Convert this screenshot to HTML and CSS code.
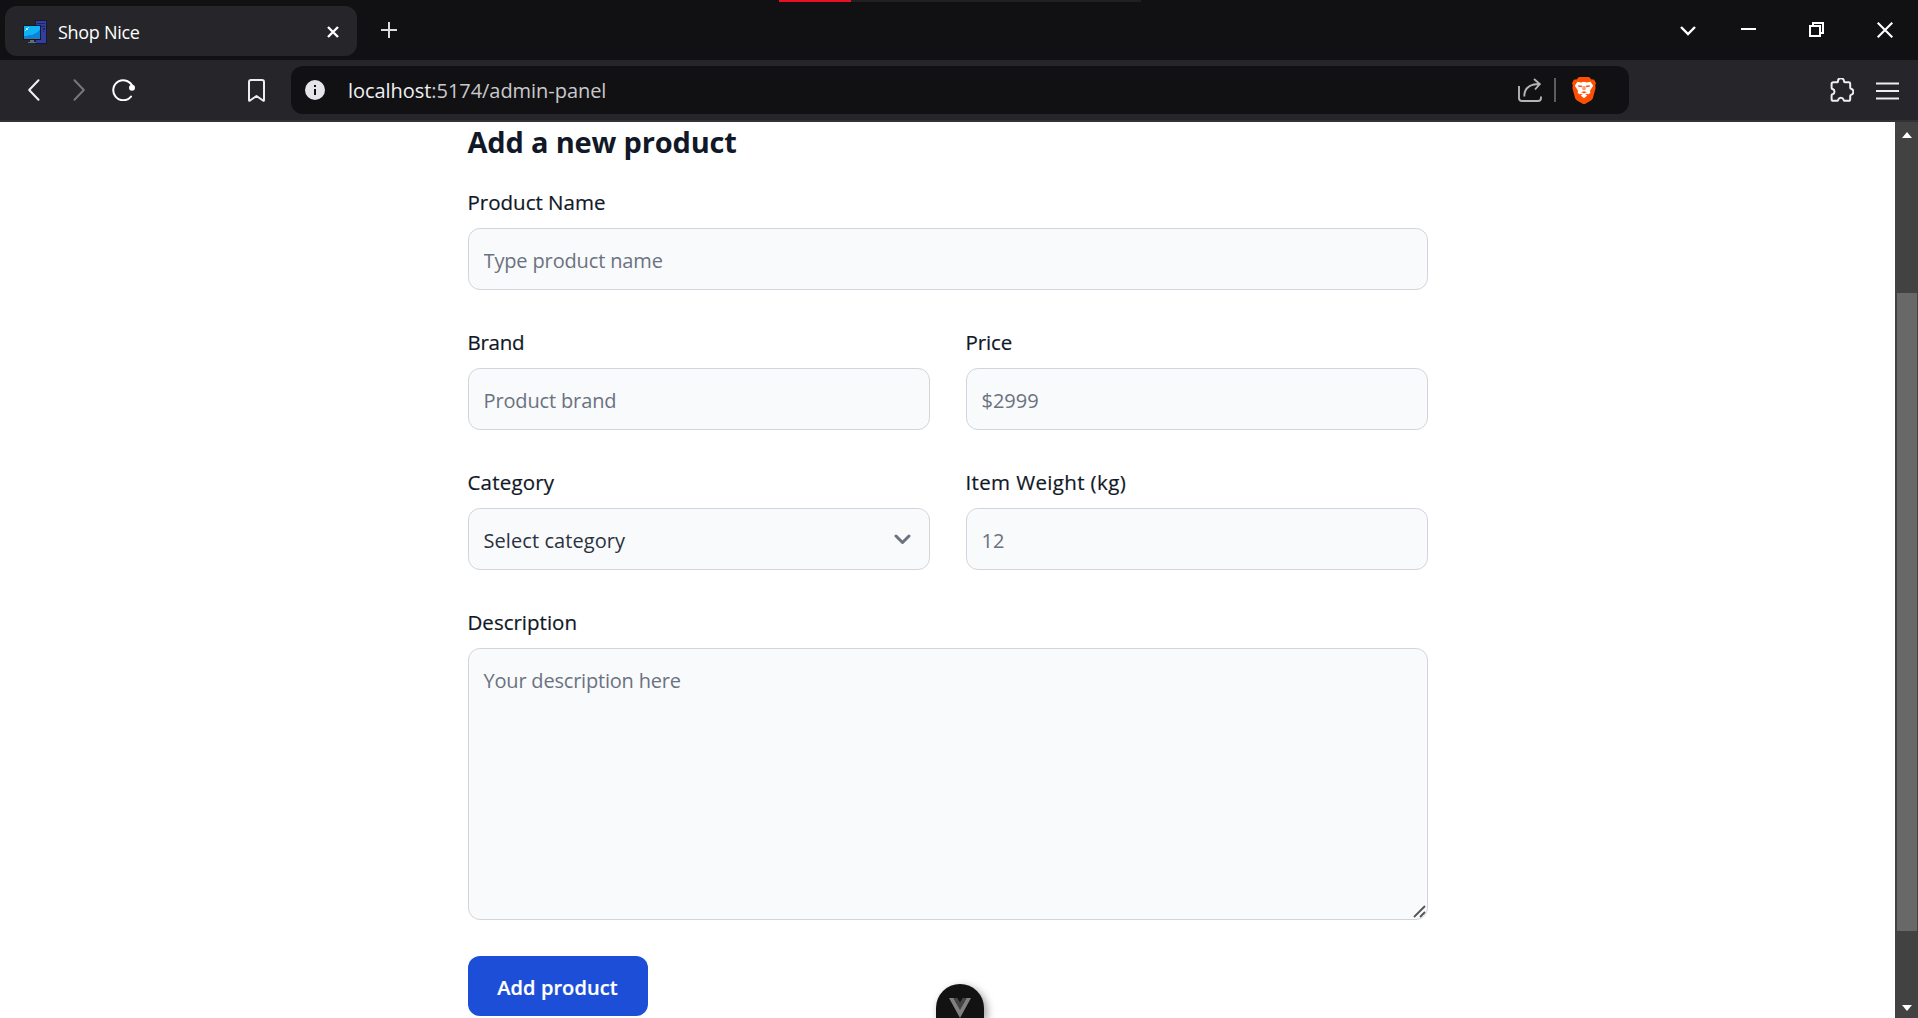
FILE: index.html
```html
<!DOCTYPE html>
<html lang="en">
<head>
<meta charset="utf-8">
<title>Shop Nice</title>
<link rel="stylesheet" href="styles.css">
</head>
<body>
<header class="tabstrip">
  <div class="tab">
    <svg class="favicon" width="24" height="24" viewBox="0 0 24 24" shape-rendering="crispEdges">
      <path fill="#14163a" d="M12 0h12v24H12z"/><path fill="#343f9c" d="M13 1h10v22H13z"/>
      <path fill="#1c2266" d="M14 3h8v1h-8zM14 6h8v1h-8zM20 8h2v2h-2zM20 11h1v1h-1z"/>
      <path fill="#0d1a33" d="M0 5h18v15H0z"/><path fill="#0a84d8" d="M1 6h16v12H1z"/>
      <path fill="#10b4f4" d="M1 6h16v4l-4 3-4 2-8 1z"/><path fill="#b8ecff" d="M3 8h2v2H3zM5 7h1v1H5zM2 10h1v1H2z"/>
      <path fill="#56707f" d="M1 18h16v1H1zM7 20h4v2H7zM5 22h8v1H5z"/>
    </svg>
    <span class="tab-title">Shop Nice</span>
    <svg class="tab-close" width="12" height="12" viewBox="0 0 12 12"><path d="M1 1l10 10M11 1L1 11" stroke="#fff" stroke-width="2.4"/></svg>
  </div>
  <svg class="newtab" width="16" height="16" viewBox="0 0 16 16"><path d="M8 0v16M0 8h16" stroke="#dcdcdf" stroke-width="2"/></svg>
  <svg class="win-menu" width="16" height="10" viewBox="0 0 16 10"><path d="M1 1l7 7 7-7" fill="none" stroke="#fff" stroke-width="2.4"/></svg>
  <svg class="win-min" width="15" height="2" viewBox="0 0 15 2"><path d="M0 0h15v2H0z" fill="#fff"/></svg>
  <svg class="win-restore" width="15" height="15" viewBox="0 0 15 15"><path d="M1 4h10v10H1zM4 4V1h10v10h-3" fill="none" stroke="#fff" stroke-width="2"/></svg>
  <svg class="win-close" width="16" height="16" viewBox="0 0 16 16"><path d="M.7.7l14.6 14.6M15.3.7L.7 15.3" stroke="#fff" stroke-width="2.1"/></svg>
  <div class="recbar"><div class="recbar-on"></div></div>
</header>
<nav class="toolbar">
  <svg class="back" width="12" height="22" viewBox="0 0 12 22"><path d="M10.5 1.2L1.2 11l9.3 9.8" fill="none" stroke="#f2f2f4" stroke-width="2" stroke-linecap="round" stroke-linejoin="round"/></svg>
  <svg class="forward" width="12" height="22" viewBox="0 0 12 22"><path d="M1.5 1.2L10.8 11l-9.3 9.8" fill="none" stroke="#77777b" stroke-width="2" stroke-linecap="round" stroke-linejoin="round"/></svg>
  <svg class="reload" width="24" height="22" viewBox="0 0 24 22"><path d="M20.800 8.200A10 10 0 1 0 19 17.600" fill="none" stroke="#fff" stroke-width="2" stroke-linecap="round"/><circle cx="20" cy="8.800" r="3" fill="#fff"/></svg>
  <svg class="bookmark" width="17" height="23" viewBox="0 0 17 23"><path d="M1 3q0-2 2-2h11q2 0 2 2v18q0 1.300-1 .5l-6.500-4.500L2 21.500q-1 .8-1-.5z" fill="none" stroke="#eee" stroke-width="2" stroke-linejoin="round"/></svg>
  <div class="omnibox">
    <svg class="info" width="20" height="20" viewBox="0 0 20 20"><circle cx="10" cy="10" r="10" fill="#e4e4ea"/><path d="M9 5h2v2H9zM9 9h2v6H9z" fill="#111113"/></svg>
    <span class="url"><span class="host">localhost</span>:5174/admin-panel</span>
    <svg class="share" width="24" height="24" viewBox="0 0 24 24"><path d="M1 8v12q0 3 3 3h16q3 0 3-3v-1.500M6.300 18.500q0-12.500 15-12.500M16 1l5.800 5L17 11.500" fill="none" stroke="#b4b4b6" stroke-width="1.900"/></svg>
    <span class="sep"></span>
    <svg class="brave" width="24" height="27" viewBox="0 0 24 27">
      <path d="M7 0h10l2.500 2.500L22 2.500 24 6l-.8 2.500.4 2.500-2.800 10.500L19 23.500 12 27.500 5 23.500 3.200 21.500.4 11l.4-2.500L0 6l2-3.500h2.500z" fill="#ff5000"/>
      <path d="M5.500 4.800l3.500.7 3-.7 3 .7 3.500-.7 2.700 4-3.200 5 .3 2.200-2 1.300-2-.4h-4.600l-2 .4-2-1.300.3-2.200-3.200-5z" fill="#fff"/>
      <path d="M12 16.300l3.300 2.200L12 21.300l-3.300-2.800z" fill="#fff"/>
      <path d="M6 8.300l4.300.5-.8 1.400-3-.5zM18 8.300l-4.300.5.8 1.400 3-.5zM10.700 9h.8l.1 4.200-1.100-.6zM13.300 9h-.8l-.1 4.200 1.100-.6zM9 15.200l3-1 3 1-1.700.5-1.300.8-1.300-.8z" fill="#ff5000"/>
    </svg>
  </div>
  <svg class="puzzle" width="24" height="24" viewBox="0 0 24 24"><path d="M3.500 4.300h4q.5 0 .5-1a3 3 0 0 1 6-.3q0 1.300.8 1.300h4q1.400 0 1.400 1.400v3.800q0 1 .8 1.200a3.200 3.200 0 0 1 0 6.200q-.8.300-.8 1.200v2.800q0 1.900-1.600 1.900h-4.300q-.7-.2-.8-1.200a2.700 2.700 0 0 0-5.200 0q-.1 1-.9 1.200h-4q-1.800 0-1.800-1.900v-3.500q0-1 1-1.100a2.800 2.800 0 0 0 0-5.300q-1-.2-1-1.100V6q0-1.700 1.900-1.700z" fill="none" stroke="#eee" stroke-width="2" stroke-linejoin="round"/></svg>
  <svg class="menu" width="23" height="18" viewBox="0 0 23 18"><path d="M0 1.500h23M0 9h23M0 16.500h23" stroke="#eee" stroke-width="2"/></svg>
</nav>
<div class="viewport">
  <main class="page">
    <form class="form">
      <h2 class="heading">Add a new product</h2>
      <div class="grid">
        <div class="field wide"><label class="label" for="name">Product Name</label><input class="input p-name" id="name" placeholder="Type product name"></div>
        <div class="field"><label class="label l-brand" for="brand">Brand</label><input class="input p-brand" id="brand" placeholder="Product brand"></div>
        <div class="field"><label class="label l-price" for="price">Price</label><input class="input" id="price" placeholder="$2999"></div>
        <div class="field"><label class="label l-cat" for="category">Category</label>
          <div class="input select" id="category"><span class="p-cat">Select category</span><svg width="17" height="11" viewBox="0 0 17 11"><path d="M2 2l6.500 6.500L15 2" fill="none" stroke="#6b7280" stroke-width="3" stroke-linecap="round" stroke-linejoin="round"/></svg></div></div>
        <div class="field"><label class="label l-weight" for="weight">Item Weight (kg)</label><input class="input" id="weight" placeholder="12"></div>
        <div class="field wide"><label class="label" for="description">Description</label>
          <div class="area-wrap"><textarea class="input area p-desc" id="description" placeholder="Your description here"></textarea>
          <svg class="grip" width="13" height="13" viewBox="0 0 13 13"><path d="M1 12L12 1M7 12l5-5" stroke="#555" stroke-width="1.800"/></svg></div></div>
      </div>
      <button class="submit" type="button">Add product</button>
    </form>
  </main>
  <div class="scrollbar">
    <svg class="arrow" width="10" height="6" viewBox="0 0 10 6"><path d="M0 6l5-6 5 6z" fill="#fff"/></svg>
    <div class="thumb"></div>
    <svg class="arrow" width="10" height="6" viewBox="0 0 10 6"><path d="M0 0l5 6 5-6z" fill="#fff"/></svg>
  </div>
</div>
<div class="devtools"><svg width="22" height="20" viewBox="0 0 22 20"><path d="M0 0h4.500L11 11.500 17.500 0H22L11 20z" fill="#808080"/><path d="M4.500 0h4L11 4.500 13.500 0h4L11 11.500z" fill="#444"/></svg></div>
</body>
</html>
```
FILE: styles.css
```css
* { box-sizing: border-box; }
body { margin: 0; width: 1918px; height: 1018px; overflow: hidden; display: flex; flex-direction: column; background: #fff; font-family: "Open Sans", "Noto Sans", sans-serif; }
svg { display: block; flex: none; }

.tabstrip { position: relative; height: 60px; background: #111113; display: flex; align-items: center; padding: 0 25px 0 5px; flex: none; }
.tab { width: 352px; height: 50px; margin-top: 2px; border-radius: 12px; background: #26262a; display: flex; align-items: center; padding: 0 18px; }
.favicon { margin-top: 2px; }
.tab-title { margin: 1px 0 0 11px; color: #fff; font-size: 18px; letter-spacing: -0.3px; white-space: nowrap; }
.tab-close { margin: 1px 0 0 auto; }
.newtab { margin-left: 24px; }
.win-menu { margin: 1px 0 0 auto; }
.win-min { margin: -2px 0 0 45px; }
.win-restore { margin: -1px 0 0 53px; }
.win-close { margin: -1px 0 0 53px; }
.recbar { position: absolute; left: 779px; top: 0; width: 362px; height: 2px; background: #202023; }
.recbar-on { width: 72px; height: 2px; background: #e81123; }

.toolbar { height: 62px; background: #26262a; border-bottom: 2px solid #323136; display: flex; align-items: center; padding: 0 19px 0 27.5px; flex: none; }
.forward { margin-left: 33px; }
.reload { margin: -1px 0 0 27px; }
.bookmark { margin: 1px 0 0 112.5px; }
.omnibox { width: 1338px; height: 48px; margin-left: 26px; border-radius: 12px; background: #111113; display: flex; align-items: center; padding: 0 33px 0 14px; }
.url { margin-left: 23px; color: #c9c9cd; font-size: 20px; letter-spacing: -0.05px; white-space: nowrap; }
.host { color: #f0f0f2; }
.share { margin-left: auto; }
.sep { width: 2px; height: 24px; margin: 0 16px 0 12px; background: #5d5d60; }
.puzzle { margin-left: auto; }
.menu { margin: 2px 0 0 22px; }

.viewport { flex: 1; min-height: 0; display: flex; overflow: hidden; }
.page { width: 1895px; display: flex; justify-content: center; background: #fff; }
.form { width: 960px; }
.heading { margin: 0 0 24px; height: 40px; color: #111827; font-size: 29px; font-weight: 700; line-height: 40px; letter-spacing: -0.18px; white-space: nowrap; }
.grid { display: grid; grid-template-columns: 1fr 1fr; gap: 36px; }
.field { display: flex; flex-direction: column; gap: 12px; min-width: 0; }
.wide { grid-column: 1 / 3; }
.label { height: 30px; padding-top: 1px; color: #111827; font-size: 20.5px; font-weight: 500; line-height: 30px; white-space: nowrap; -webkit-text-stroke: 0.2px #111827; }
.l-brand { letter-spacing: -0.28px; }
.l-price { letter-spacing: -0.1px; }
.l-cat { letter-spacing: 0.19px; }
.l-weight { letter-spacing: 0.36px; }
.input { display: block; width: 100%; height: 62px; margin: 0; padding: 3px 15px 0; border: 1px solid #d1d5db; border-radius: 12px; background: #f9fafb; color: #111827; font: 400 20px "Open Sans", "Noto Sans", sans-serif; outline: none; }
.input::placeholder { color: #6b7280; opacity: 1; }
.p-name, .p-brand { letter-spacing: -0.14px; }
.p-desc { letter-spacing: -0.2px; }
.p-cat { color: #2a3140; letter-spacing: 0.08px; }
.select { display: flex; align-items: center; justify-content: space-between; padding-right: 18px; }
.select svg { margin-top: -3px; }
.area-wrap { position: relative; }
.area { height: 272px; padding: 16px 15px; line-height: 32px; resize: none; }
.grip { position: absolute; right: 2px; bottom: 2px; }
.submit { display: block; width: 180px; height: 60px; margin: 36px 0 0; padding: 2px 0 0; border: 0; border-radius: 12px; background: #1d4ed8; color: #fff; font: 600 20px "Open Sans", "Noto Sans", sans-serif; letter-spacing: 0.07px; -webkit-text-stroke: 0.2px #fff; }

.scrollbar { width: 23px; background: #424242; display: flex; flex-direction: column; align-items: center; padding: 10px 0 7px; }
.thumb { width: 20px; height: 638px; margin: 155px 0 auto; background: #686868; }

.devtools { position: absolute; left: 936px; top: 984px; width: 48px; height: 34px; border-radius: 24px 24px 0 0; background: #121212; box-shadow: 3px 3px 9px rgba(0,0,0,.4); display: flex; justify-content: center; padding-top: 14px; overflow: hidden; }
```
